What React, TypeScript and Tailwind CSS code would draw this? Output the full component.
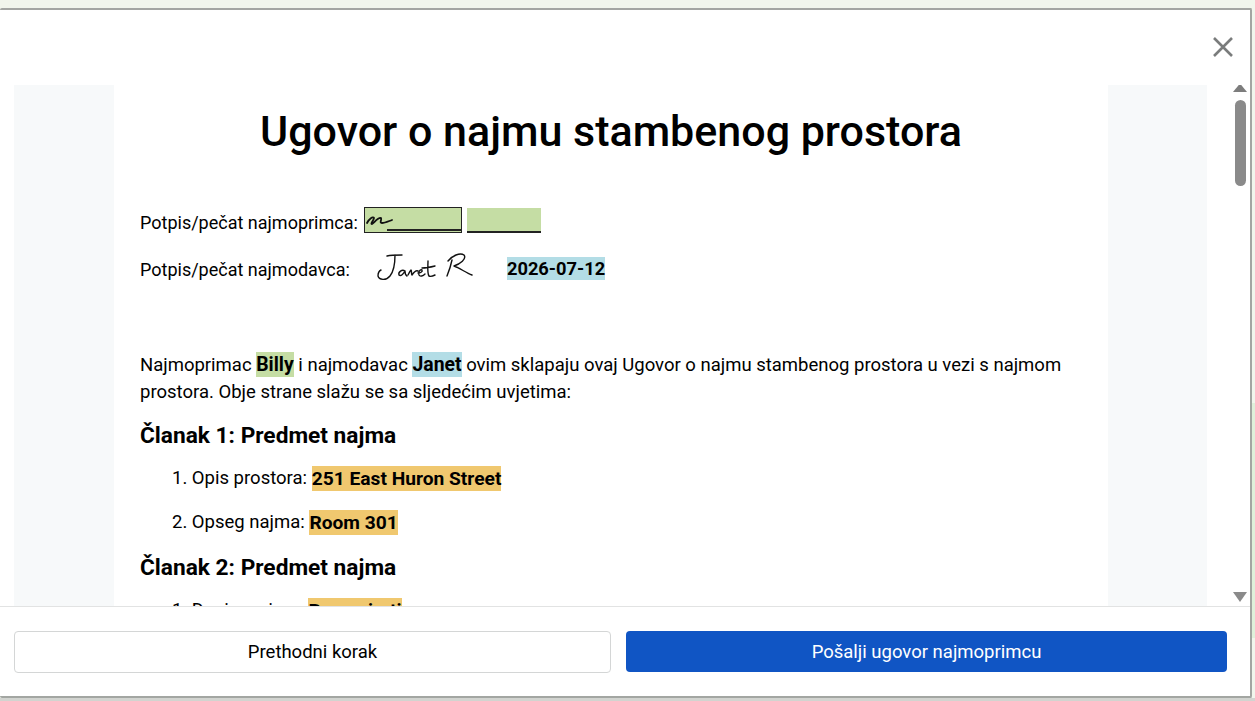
const sans = { fontFamily: 'Roboto, "Open Sans", sans-serif' };

function Mark({ color, children }: { color: string; children: React.ReactNode }) {
  return <strong className={`${color} py-[1px] text-[19.4px] font-bold`}>{children}</strong>;
}

function ClauseItem({ label, value }: { label: string; value: string }) {
  return (
    <li className="flex h-[44px] items-center pl-[32px] text-[18.5px] leading-[25px]">
      <span className="whitespace-pre">{label} </span>
      <strong className="bg-[#f0c86f] text-[19.2px] font-bold">{value}</strong>
    </li>
  );
}

function InitialsScrawl() {
  return (
    <svg width="30" height="22" viewBox="0 0 30 22" className="absolute left-0 top-0">
      <path
        d="M2 15C4 11 8 8 9 10C9 12 5 16 7 16C9 15 13 9 16 10C17 12 14 15 17 15C20 15 24 13 27 12"
        fill="none"
        stroke="#111"
        strokeWidth="1.8"
        strokeLinecap="round"
      />
    </svg>
  );
}

function JanetSignature() {
  return (
    <svg width="100" height="34" viewBox="0 0 100 34" className="shrink-0">
      <g fill="none" stroke="#111" strokeWidth="1.4" strokeLinecap="round" strokeLinejoin="round">
        <path d="M11 5C15 4 22 4 26 4M19 4C19 12 18 20 14 25C10 30 3 29 2 25C2 22 3 20 5 19" />
        <path d="M29 20C26 18 22 21 23 24C25 26 28 22 29 20C29 22 29 24 31 25" />
        <path d="M32 24C33 22 34 20 35 19C36 20 35 23 36 24C38 21 40 19 42 20M42 22C44 22 47 21 46 19C44 18 42 21 43 24C44 26 47 25 49 23" />
        <path d="M46 17C50 17 55 16 59 15M52 10C52 15 51 22 53 25C55 26 57 25 59 24" />
        <path d="M76 9C75 14 73 20 71 25M72 10C76 5 84 1 88 4C91 8 84 13 78 15C84 17 90 22 96 24" />
      </g>
    </svg>
  );
}

export default function App() {
  return (
    <div className="flex h-[701px] w-[1255px] flex-col overflow-hidden bg-[#f1f6ec]" style={sans}>
      <div className="h-2 shrink-0" />
      <div className="flex min-h-0 flex-1">
        <div className="flex w-[1252px] flex-col rounded-[2px] border-t-2 border-r-2 border-b-2 border-[#a3a6a2] bg-white text-black">
          <div className="flex h-[75px] shrink-0 items-start justify-end pt-[26px] pr-[16px]">
            <svg width="22" height="22" viewBox="0 0 22 22">
              <path d="M2 2l18 18M20 2L2 20" stroke="#7a7c7c" strokeWidth="2.6" />
            </svg>
          </div>

          <div className="relative min-h-0 flex-1 overflow-hidden">
            <div className="ml-[14px] flex h-full w-[1193px] bg-[#f7f9fa]">
              <div className="ml-[100px] h-[640px] w-[994px] bg-white px-[26px]">
                <h1 className="pt-[15px] text-center text-[43px] leading-[62px] font-medium">
                  Ugovor o najmu stambenog prostora
                </h1>

                <div className="mt-[38px] flex h-[40px] items-center text-[18px]">
                  <span className="pt-[4px]">Potpis/pečat najmoprimca:</span>
                  <span className="relative ml-[6px] h-[26px] w-[98px] border border-[#222] bg-[#c5dda4]">
                    <InitialsScrawl />
                    <span className="absolute right-0 bottom-[1px] left-[22px] border-b-2 border-[#222]" />
                  </span>
                  <span className="ml-[5px] h-[25px] w-[74px] border-b-2 border-[#222] bg-[#c5dda4]" />
                </div>
                <div className="mt-[8px] flex h-[40px] items-center text-[18px]">
                  <span className="pt-[2px]">Potpis/pečat najmodavca:</span>
                  <span className="ml-[26px]">
                    <JanetSignature />
                  </span>
                  <strong className="mt-[1px] ml-[31px] bg-[#b3dde6] text-[18.3px] leading-[23px] font-bold">
                    2026-07-12
                  </strong>
                </div>

                <p className="mt-[63px] text-[18.5px] leading-[27px]">
                  Najmoprimac <Mark color="bg-[#c5dda4]">Billy</Mark> i najmodavac{' '}
                  <Mark color="bg-[#b3dde6]">Janet</Mark> ovim sklapaju ovaj Ugovor o najmu stambenog prostora u vezi s
                  najmom prostora. Obje strane slažu se sa sljedećim uvjetima:
                </p>

                <h2 className="mt-[12px] text-[22.7px] leading-[36px] font-bold">Članak 1: Predmet najma</h2>
                <ol className="mt-[2px]">
                  <ClauseItem label="1. Opis prostora:" value="251 East Huron Street" />
                  <ClauseItem label="2. Opseg najma:" value="Room 301" />
                </ol>
                <h2 className="mt-[6px] text-[22.7px] leading-[36px] font-bold">Članak 2: Predmet najma</h2>
                <ol className="mt-[2px]">
                  <ClauseItem label="1. Dani u najmu:" value="Rezervirati" />
                </ol>
              </div>
            </div>
            <div className="absolute top-0 right-[2px] bottom-0 flex w-[16px] flex-col items-center">
              <svg width="14" height="9" viewBox="0 0 14 9" className="mt-[-2px] shrink-0">
                <path d="M7 0.5L14 9H0z" fill="#7d7d7d" />
              </svg>
              <div className="mt-[8px] h-[86px] w-[11px] rounded-full bg-[#8a8a8a]" />
              <div className="flex-1" />
              <svg width="14" height="10" viewBox="0 0 14 10" className="mb-[4px] shrink-0">
                <path d="M0 0h14L7 10z" fill="#8a8a8a" />
              </svg>
            </div>
          </div>

          <div className="flex h-[90px] shrink-0 gap-[15px] border-t border-[#e2e3e3] bg-white pt-[24px] pr-[23px] pl-[14px]">
            <button className="h-[42px] w-[597px] rounded-[4px] border border-[#d4d6d6] bg-white pt-[2px] text-[18.5px] text-black">
              Prethodni korak
            </button>
            <button className="h-[41px] flex-1 rounded-[4px] bg-[#1055c4] pt-[2px] text-[18.5px] text-white">
              Pošalji ugovor najmoprimcu
            </button>
          </div>
        </div>
        <div className="flex flex-1 flex-col pt-[395px] pb-[60px]">
          <div className="flex-1 bg-[#dff0da]" />
        </div>
      </div>
      <div className="h-[3px] shrink-0 bg-[#d2d4d0]" />
    </div>
  );
}
